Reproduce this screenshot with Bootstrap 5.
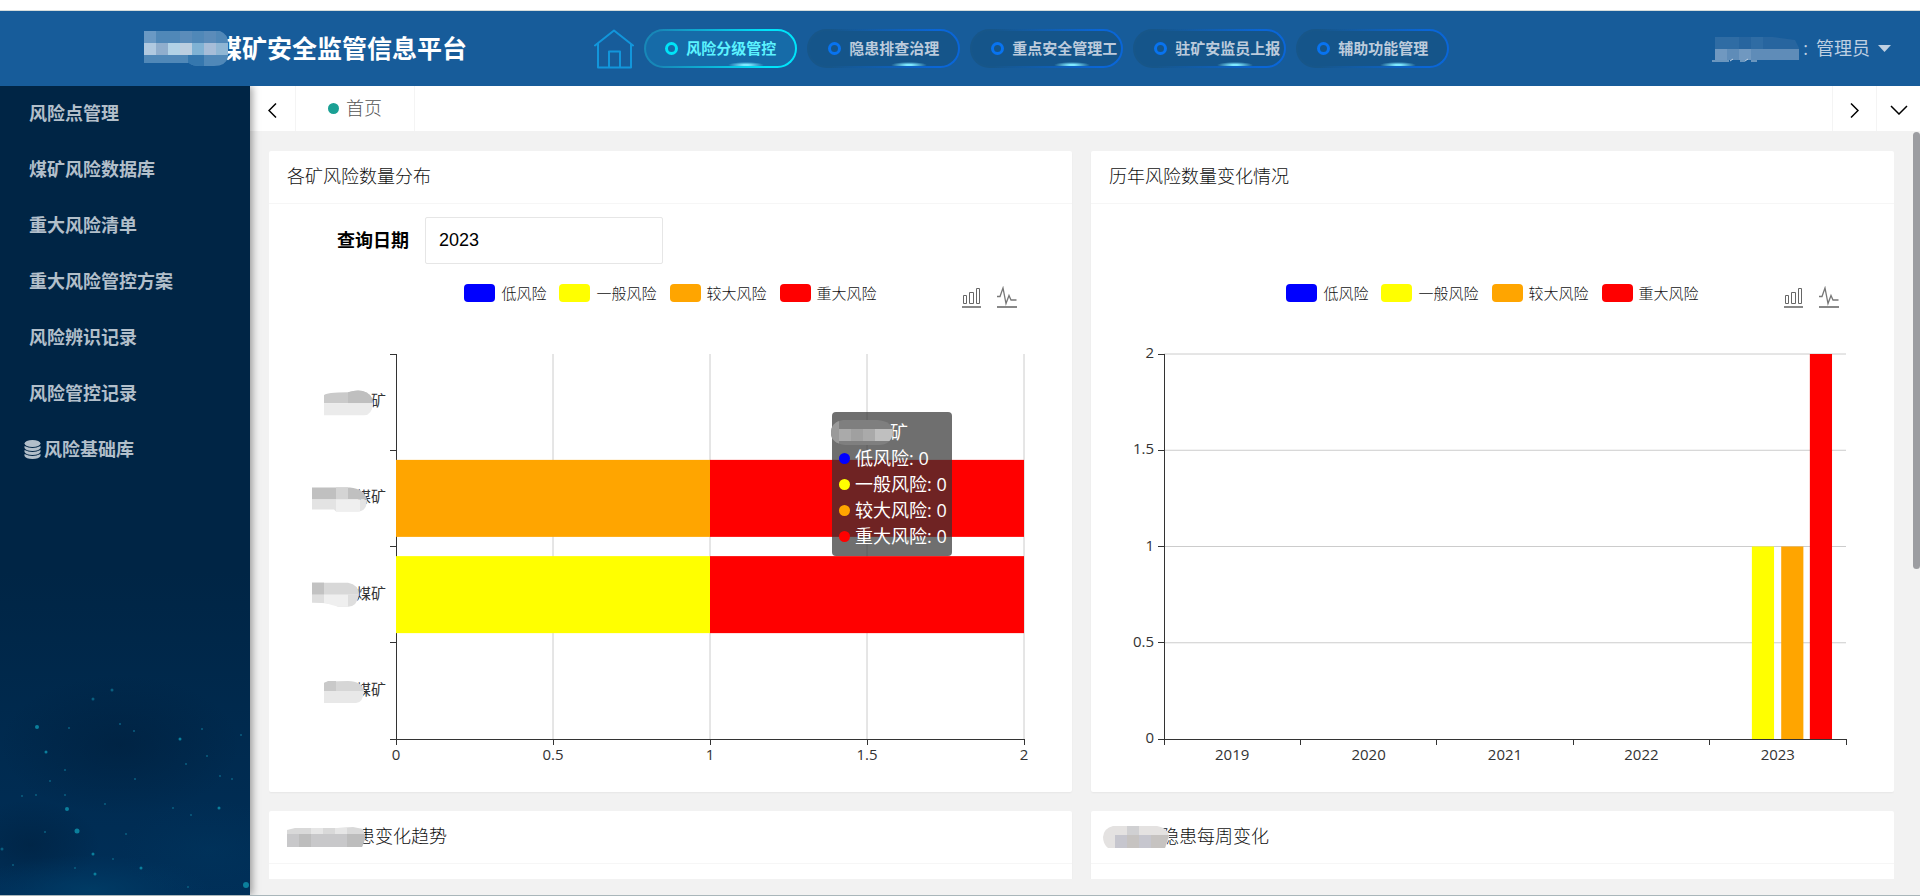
<!DOCTYPE html>
<html lang="zh-CN">
<head>
<meta charset="utf-8">
<meta name="viewport" content="width=device-width, initial-scale=1">
<title>煤矿安全监管信息平台</title>
<link href="https://cdn.jsdelivr.net/npm/bootstrap@5.3.0/dist/css/bootstrap.min.css" rel="stylesheet">
<style>
  body { font-family: "Open Sans", "Noto Sans CJK SC", sans-serif; font-size: 18px; color: #333; background: #f2f2f2; border-bottom: 1px solid #a9b6ba; }
  .top-strip { height: 11px; border-bottom: 1px solid #d4dcdc; }
  .app-header { height: 75px; background: #175c9a; }
  .brand-block { flex: 0 0 31%; padding-left: 144px; margin-right: -1px; }
  .brand-name { font-size: 25px; font-weight: 700; color: #fff; }
  .mosaic { flex: none; position: relative; z-index: 1; }
  .mosaic-brand { margin-right: -11px; }
  .mosaic-title { margin-right: -8px; }
  .mosaic-early { margin-left: -6px; }
  .pill-nav { gap: 10px; }
  .pill { position: relative; width: 153px; height: 39px; padding: 0 2px 0 19px; gap: 8px; border: 2px solid transparent; border-radius: 20px; font-size: 15px; font-weight: 700; color: #bccbdc; text-decoration: none; white-space: nowrap; overflow: hidden;
    background: linear-gradient(#15558a, #15558a) padding-box, linear-gradient(90deg, #175689 15%, #0a66d8 85%) border-box; }
  .pill::before { content: ""; flex: none; width: 13px; height: 13px; border: 3px solid #0873f0; border-radius: 50%; }
  .pill::after { content: ""; position: absolute; left: 82px; bottom: -2px; width: 36px; height: 6px; background: radial-gradient(closest-side, #7fe9ff 20%, transparent); }
  .pill.active { color: #5cf3ff; background: linear-gradient(#166ba8, #166ba8) padding-box, linear-gradient(90deg, #1788b8 10%, #00e4fa 80%) border-box; }
  .pill.active::before { border-color: #00e4f8; }
  .user-btn { color: #bfd0e2; padding: 0 29px 0 0; border: 0; background: none; gap: 8px; }
  .side-menu { width: 250px; flex: none; background: linear-gradient(#002545 60%, #002f58); box-shadow: 2px 0 8px rgba(0,0,0,.4); z-index: 2; }
  .side-link { height: 56px; padding: 0 0 1px 29px; font-weight: 700; color: #b2bfca; text-decoration: none; gap: 3px; }
  .side-link.has-icon { padding-left: 24px; }
  .tab-bar { height: 45px; background: #fff; }
  .tab-btn { width: 46px; border: 0; border-right: 1px solid #f4f4f4; background: none; padding: 0; }
  .tab-btn.at-right { width: 44px; border-right: 0; border-left: 1px solid #f4f4f4; }
  .tab-home { width: 119px; border-right: 1px solid #f4f4f4; color: #555; text-decoration: none; gap: 7px; font-weight: 300; }
  .tab-home::before { content: ""; width: 11px; height: 11px; border-radius: 50%; background: #1aa094; }
  .content-pane { padding: 20px 26px 16px 19px; position: relative; }
  .scroll-thumb { position: absolute; right: 0; top: 1px; width: 7px; height: 437px; border-radius: 4px; background: #9c9da1; }
  .panels { grid-template-columns: 1fr 1fr; gap: 19px; }
  .panel { background: #fff; border-radius: 2px; box-shadow: 0 1px 2px rgba(0,0,0,.05); }
  .panel-title { height: 53px; padding: 0 18px; border-bottom: 1px solid #f6f6f6; font-size: 18px; font-weight: 300; color: #111; margin: 0; }
  .query-row { padding: 13px 0 20px 68px; gap: 16px; color: #000; }
  .query-row label { font-weight: 700; }
  .query-row input { width: 238px; height: 47px; border: 1px solid #e6e6e6; border-radius: 2px; padding: 0 13px; font-family: "Liberation Sans", sans-serif; color: #000; }
  .legend-row { display: grid; grid-template-columns: 1fr auto 1fr; height: 24px; margin-bottom: 46px; padding: 0 55px; }
  .legend-list { grid-column: 2; gap: 13px; font-size: 15px; line-height: 18px; font-weight: 300; color: #111; }
  .legend-item { gap: 6px; }
  .swatch { width: 31px; height: 18px; border-radius: 4px; }
  .c-low { background: #00f; } .c-mid { background: #ff0; } .c-big { background: orange; } .c-max { background: red; }
  .tool-btn { border: 0; background: none; padding: 0; line-height: 0; }
  .plot { position: relative; height: 385px; margin: 0 48px 53px 127px; }
  .plot-years { margin-left: 73px; }
  .plot > svg { display: block; width: 100%; height: 100%; overflow: visible; font-size: 15px; fill: #333; }
  .plot svg svg { overflow: visible; }
  .grid-line { stroke: #ccc; } .axis-line { stroke: #333; }
  .chart-tip { position: absolute; right: 72px; top: 58px; width: 120px; padding: 7px; background: rgba(50,50,50,.7); border-radius: 4px; color: #fff; line-height: 26px; font-size: 18px; white-space: nowrap; }
  .chart-tip .dot { flex: none; width: 11px; height: 11px; border-radius: 50%; }
  .chart-tip .tip-row { gap: 5px; }
  .tip-name { margin-left: -8px; }
  .mosaic-tip { margin-right: -3px; }
  .panel-rest { height: 588px; }
</style>
</head>
<body class="vh-100 d-flex flex-column overflow-hidden">
<div class="top-strip bg-white flex-shrink-0"></div>
<header class="app-header d-flex align-items-center flex-shrink-0">
  <div class="brand-block d-flex align-items-center">
    <svg class="mosaic mosaic-brand" width="84" height="35" viewBox="0 0 84 35"><clipPath id="mb"><path d="M0 0H76Q84 3 84 12V26Q82 35 70 35H56Q48 35 45 32H0Z"/></clipPath><g clip-path="url(#mb)"><path fill="#5088b8" d="M0 0h84v35H0z"/><path fill="#6a99c4" d="M0 0h12v12H0z"/><path fill="#5b8cba" d="M36 0h12v12H36zM60 0h12v12H60z"/><path fill="#b0c9e0" d="M0 12h12v12H0z"/><path fill="#90aecd" d="M12 12h12v12H12z"/><path fill="#b2d2e6" d="M24 12h12v12H24z"/><path fill="#bccee0" d="M36 12h12v12H36z"/><path fill="#80b2d4" d="M48 12h12v12H48z"/><path fill="#a6bdd8" d="M60 12h12v12H60z"/><path fill="#8fb6d4" d="M72 12h12v12H72z"/><path fill="#3577ae" d="M44 24h16v11H44z"/></g></svg>
    <span class="brand-name">煤矿安全监管信息平台</span>
  </div>
  <nav class="pill-nav d-flex align-items-center">
    <a href="#" aria-label="首页"><svg class="d-block" width="40" height="40" viewBox="0 0 40 40" fill="none" stroke="#1296db" stroke-width="2" stroke-linejoin="round" stroke-linecap="round"><path d="M1 16.500 20 1.500 39 16.500M4 15V38.500H37V15M15 38V22.500H26V38"/></svg></a>
    <a class="pill active d-flex align-items-center" href="#">风险分级管控</a>
    <a class="pill d-flex align-items-center" href="#">隐患排查治理</a>
    <a class="pill d-flex align-items-center" href="#">重点安全管理工</a>
    <a class="pill d-flex align-items-center" href="#">驻矿安监员上报</a>
    <a class="pill d-flex align-items-center" href="#">辅助功能管理</a>
  </nav>
  <button class="user-btn d-flex align-items-center ms-auto" type="button">
    <span class="d-flex align-items-center"><svg width="92" height="26" viewBox="0 0 92 26"><path fill="#27659f" d="M4 1H62L84 4 88 12V24H4Z"/><path fill="#2f6ca4" d="M4 1h24v12H4zM40 1h12v12H40z"/><path fill="#5f8cb8" d="M4 13h84v11H4z"/><path fill="#7098c0" d="M4 13h12v11H4zM28 13h12v11H28z"/><path fill="none" stroke="#bfd0e2" d="M1 25H18M19 25l3-2M29 25h5l3-2M40 25h6"/></svg>:</span>
    <span>管理员</span>
    <svg width="13" height="7" viewBox="0 0 13 7"><path fill="#bfd0e2" d="M0 0h13L6.500 7z"/></svg>
  </button>
</header>
<div class="d-flex flex-grow-1 overflow-hidden">
  <aside class="side-menu d-flex flex-column">
    <nav class="d-flex flex-column">
      <a class="side-link d-flex align-items-center" href="#">风险点管理</a>
      <a class="side-link d-flex align-items-center" href="#">煤矿风险数据库</a>
      <a class="side-link d-flex align-items-center" href="#">重大风险清单</a>
      <a class="side-link d-flex align-items-center" href="#">重大风险管控方案</a>
      <a class="side-link d-flex align-items-center" href="#">风险辨识记录</a>
      <a class="side-link d-flex align-items-center" href="#">风险管控记录</a>
      <a class="side-link has-icon d-flex align-items-center" href="#"><svg width="17" height="19" viewBox="0 0 17 19"><ellipse cx="8.500" cy="3.500" rx="8" ry="3.500" fill="#b2bfca"/><path fill="#b2bfca" d="M.5 6Q8.500 10 16.500 6V8Q15 11 8.500 11T.5 8ZM.5 10Q8.500 14 16.500 10V12Q15 15 8.500 15T.5 12ZM.5 14Q8.500 18 16.500 14V16Q15 19 8.500 19T.5 16Z"/></svg>风险基础库</a>
    </nav>
    <svg class="mt-auto d-block" width="250" height="225" viewBox="0 0 250 225">
      <defs><radialGradient id="haze"><stop offset="0" stop-color="#00406a" stop-opacity=".7"/><stop offset="1" stop-color="#003a66" stop-opacity="0"/></radialGradient><radialGradient id="dusk"><stop offset="0" stop-color="#001a34" stop-opacity=".4"/><stop offset="1" stop-color="#001a34" stop-opacity="0"/></radialGradient></defs>
      <ellipse cx="120" cy="75" rx="120" ry="70" fill="url(#dusk)"/><ellipse cx="30" cy="175" rx="70" ry="45" fill="url(#dusk)"/><ellipse cx="90" cy="220" rx="120" ry="35" fill="url(#haze)"/><ellipse cx="210" cy="180" rx="90" ry="50" fill="url(#haze)" opacity=".3"/>
      <g fill="#0b7f9c"><circle cx="37" cy="57" r="2"/><circle cx="67" cy="139" r="2"/><circle cx="77" cy="161" r="2.500"/><circle cx="246" cy="215" r="3"/><circle cx="46" cy="82" r="1.500"/><circle cx="93" cy="184" r="1.500"/><circle cx="95" cy="204" r="1.500"/><circle cx="141" cy="198" r="1.500"/><circle cx="219" cy="138" r="1.500"/><circle cx="180" cy="69" r="1.500"/></g>
      <g fill="#0a5f80"><circle cx="93" cy="29" r="1.500"/><circle cx="112" cy="20" r="1.500"/><circle cx="69" cy="58" r="1"/><circle cx="134" cy="61" r="1"/><circle cx="120" cy="54" r="1"/><circle cx="202" cy="59" r="1"/><circle cx="207" cy="86" r="1"/><circle cx="65" cy="100" r="1"/><circle cx="50" cy="111" r="1"/><circle cx="36" cy="125" r="1"/><circle cx="22" cy="126" r="1"/><circle cx="65" cy="125" r="1"/><circle cx="105" cy="134" r="1"/><circle cx="126" cy="164" r="1"/><circle cx="191" cy="145" r="1"/><circle cx="173" cy="138" r="1"/><circle cx="135" cy="109" r="1"/><circle cx="232" cy="109" r="1"/><circle cx="220" cy="106" r="1"/><circle cx="186" cy="94" r="1"/><circle cx="45" cy="162" r="1"/><circle cx="13" cy="195" r="1"/><circle cx="2" cy="179" r="1.500"/><circle cx="75" cy="198" r="1"/><circle cx="113" cy="189" r="1"/><circle cx="241" cy="65" r="1"/><circle cx="188" cy="217" r="1"/></g>
    </svg>
  </aside>
  <main class="d-flex flex-column flex-grow-1 overflow-hidden">
    <div class="tab-bar d-flex flex-shrink-0">
      <button class="tab-btn" type="button" aria-label="向左"><svg width="9" height="15" viewBox="0 0 9 15" fill="none" stroke="#000" stroke-width="1.500"><path d="M8 .5 1 7.500 8 14.500"/></svg></button>
      <a class="tab-home d-flex align-items-center justify-content-center" href="#">首页</a>
      <button class="tab-btn at-right ms-auto" type="button" aria-label="向右"><svg width="9" height="15" viewBox="0 0 9 15" fill="none" stroke="#000" stroke-width="1.500"><path d="M1 .5 8 7.500 1 14.500"/></svg></button>
      <button class="tab-btn at-right" type="button" aria-label="展开"><svg width="18" height="10" viewBox="0 0 18 10" fill="none" stroke="#000" stroke-width="1.500"><path d="M1 1 9 9 17 1"/></svg></button>
    </div>
    <div class="content-pane flex-grow-1 overflow-hidden">
      <div class="panels d-grid h-100 overflow-hidden align-content-start">
        <section class="panel">
          <h2 class="panel-title d-flex align-items-center">各矿风险数量分布</h2>
          <form class="query-row d-flex align-items-center"><label for="year">查询日期</label><input id="year" type="text" value="2023"></form>
          <div class="legend-row">
            <div class="legend-list d-flex"><span class="legend-item d-flex"><i class="swatch c-low"></i>低风险</span><span class="legend-item d-flex"><i class="swatch c-mid"></i>一般风险</span><span class="legend-item d-flex"><i class="swatch c-big"></i>较大风险</span><span class="legend-item d-flex"><i class="swatch c-max"></i>重大风险</span></div>
            <div class="d-flex justify-content-end align-items-end gap-3">
              <button class="tool-btn" type="button" aria-label="柱状图"><svg width="19" height="22" viewBox="0 0 19 22" fill="none" stroke="#666"><path d="M1.500 9.500h3v8h-3zM7.500 6.500h4v11h-4zM14.500 2.500h3v15h-3z"/><path stroke-width="2" stroke="#888" d="M0 21h19"/></svg></button>
              <button class="tool-btn" type="button" aria-label="折线图"><svg width="20" height="22" viewBox="0 0 20 22" fill="none" stroke="#777"><path stroke-width="1.300" d="M0 10.500H3L6 2 9 17.500 12 9.500 14 14H19.500"/><path stroke-width="2" stroke="#888" d="M0 21h20"/></svg></button>
            </div>
          </div>
          <div class="plot">
            <svg role="img" aria-label="各矿风险数量分布图">
              <g class="grid-line"><line x1="25%" x2="25%" y2="100%"/><line x1="50%" x2="50%" y2="100%"/><line x1="75%" x2="75%" y2="100%"/><line x1="100%" x2="100%" y2="100%"/></g>
              <g class="axis-line" shape-rendering="crispEdges"><line y2="100%"/><line x1="0" x2="100%" y1="100%" y2="100%"/><line x1="-6" x2="0" y1="0" y2="0"/><line x1="-6" x2="0" y1="25%" y2="25%"/><line x1="-6" x2="0" y1="50%" y2="50%"/><line x1="-6" x2="0" y1="75%" y2="75%"/><line x1="-6" x2="0" y1="100%" y2="100%"/>
                <svg y="100%"><line y2="6"/><line x1="25%" x2="25%" y2="6"/><line x1="50%" x2="50%" y2="6"/><line x1="75%" x2="75%" y2="6"/><line x1="100%" x2="100%" y2="6"/></svg></g>
              <rect x="0" y="27.500%" width="50%" height="20%" fill="orange"/><rect x="50%" y="27.500%" width="50%" height="20%" fill="red"/>
              <rect x="0" y="52.500%" width="50%" height="20%" fill="#ff0"/><rect x="50%" y="52.500%" width="50%" height="20%" fill="red"/>
              <svg y="12.500%"><text x="-10" y="4" text-anchor="end">矿</text><path fill="#cacaca" d="M-72 1V-7Q-70-10-48-10-30-15-24-4L-23 1Z"/><path fill="#bfbfbf" d="M-48 1V-10Q-30-15-24-4L-23 1Z"/><path fill="#ebebeb" d="M-72 1H-23Q-24 13-32 13H-72Z"/></svg>
              <svg y="37.500%"><text x="-10" y="4" text-anchor="end">煤矿</text><path fill="#c0c0c0" d="M-84 1V-11H-46Q-32-10-29 1Z"/><path fill="#d4d4d4" d="M-60-11h12V1h-12z"/><path fill="#e3e3e3" d="M-84 1H-29Q-29 13-38 13H-60L-62 11H-84Z"/><path fill="#efefef" d="M-60 1h24v12h-24z"/></svg>
              <svg y="62.500%"><text x="-10" y="4" text-anchor="end">煤矿</text><path fill="#d8d8d8" d="M-84 0V-12H-48Q-37-10-37 0Z"/><path fill="#c2c2c2" d="M-84-12h12V0h-12z"/><path fill="#dedede" d="M-84 0H-37Q-39 12-48 12H-58Q-62 8-84 8Z"/><path fill="#efefef" d="M-72 0h24v12H-58L-72 8z"/></svg>
              <svg y="87.500%"><text x="-10" y="4" text-anchor="end">煤矿</text><path fill="#d6d6d6" d="M-72 0V-8Q-70-10-48-10-34-10-32 0Z"/><path fill="#c9c9c9" d="M-72 0V-8L-68-10H-60V0Z"/><path fill="#e8e8e8" d="M-72 0H-32Q-33 12-40 12H-72Z"/></svg>
              <svg y="100%" text-anchor="middle"><text x="0" y="21">0</text><text x="25%" y="21">0.5</text><text x="50%" y="21">1</text><text x="75%" y="21">1.5</text><text x="100%" y="21">2</text></svg>
            </svg>
            <div class="chart-tip">
              <div class="tip-name d-flex align-items-center"><svg class="mosaic mosaic-tip" width="62" height="25" viewBox="0 0 62 25"><clipPath id="mt"><path d="M12 0H46Q62 1 62 13 60 25 48 25H14Q0 23 0 13 0 2 12 0Z"/></clipPath><g clip-path="url(#mt)"><path fill="#7f7f7f" d="M0 0h62v25H0z"/><path fill="#9a9a9a" d="M0 0h8v25H0z"/><path fill="#aaa" d="M8 9h12v12H8zM32 9h12v12H32z"/><path fill="#a0a0a0" d="M20 9h12v12H20z"/><path fill="#bfbfbf" d="M44 9h18v12H44z"/></g></svg>矿</div>
              <div class="tip-row d-flex align-items-center"><i class="dot c-low"></i>低风险: 0</div>
              <div class="tip-row d-flex align-items-center"><i class="dot c-mid"></i>一般风险: 0</div>
              <div class="tip-row d-flex align-items-center"><i class="dot c-big"></i>较大风险: 0</div>
              <div class="tip-row d-flex align-items-center"><i class="dot c-max"></i>重大风险: 0</div>
            </div>
          </div>
        </section>
        <section class="panel d-flex flex-column">
          <h2 class="panel-title d-flex align-items-center">历年风险数量变化情况</h2>
          <div class="legend-row mt-auto">
            <div class="legend-list d-flex"><span class="legend-item d-flex"><i class="swatch c-low"></i>低风险</span><span class="legend-item d-flex"><i class="swatch c-mid"></i>一般风险</span><span class="legend-item d-flex"><i class="swatch c-big"></i>较大风险</span><span class="legend-item d-flex"><i class="swatch c-max"></i>重大风险</span></div>
            <div class="d-flex justify-content-end align-items-end gap-3">
              <button class="tool-btn" type="button" aria-label="柱状图"><svg width="19" height="22" viewBox="0 0 19 22" fill="none" stroke="#666"><path d="M1.500 9.500h3v8h-3zM7.500 6.500h4v11h-4zM14.500 2.500h3v15h-3z"/><path stroke-width="2" stroke="#888" d="M0 21h19"/></svg></button>
              <button class="tool-btn" type="button" aria-label="折线图"><svg width="20" height="22" viewBox="0 0 20 22" fill="none" stroke="#777"><path stroke-width="1.300" d="M0 10.500H3L6 2 9 17.500 12 9.500 14 14H19.500"/><path stroke-width="2" stroke="#888" d="M0 21h20"/></svg></button>
            </div>
          </div>
          <div class="plot plot-years">
            <svg role="img" aria-label="历年风险数量变化图">
              <g class="grid-line"><line x2="100%"/><line x2="100%" y1="25%" y2="25%"/><line x2="100%" y1="50%" y2="50%"/><line x2="100%" y1="75%" y2="75%"/></g>
              <rect x="86.200%" y="50%" width="3.250%" height="50%" fill="#ff0"/><rect x="90.500%" y="50%" width="3.250%" height="50%" fill="orange"/><rect x="94.700%" y="0" width="3.250%" height="100%" fill="red"/>
              <g class="axis-line" shape-rendering="crispEdges"><line y2="100%"/><line x2="100%" y1="100%" y2="100%"/><line x1="-6" x2="0" y1="0" y2="0"/><line x1="-6" x2="0" y1="25%" y2="25%"/><line x1="-6" x2="0" y1="50%" y2="50%"/><line x1="-6" x2="0" y1="75%" y2="75%"/><line x1="-6" x2="0" y1="100%" y2="100%"/>
                <svg y="100%"><line y2="6"/><line x1="20%" x2="20%" y2="6"/><line x1="40%" x2="40%" y2="6"/><line x1="60%" x2="60%" y2="6"/><line x1="80%" x2="80%" y2="6"/><line x1="100%" x2="100%" y2="6"/></svg></g>
              <g text-anchor="end"><text x="-10" y="0" dy="4">2</text><text x="-10" y="25%" dy="4">1.5</text><text x="-10" y="50%" dy="4">1</text><text x="-10" y="75%" dy="4">0.5</text><text x="-10" y="100%" dy="4">0</text></g>
              <svg y="100%" text-anchor="middle"><text x="10%" y="21">2019</text><text x="30%" y="21">2020</text><text x="50%" y="21">2021</text><text x="70%" y="21">2022</text><text x="90%" y="21">2023</text></svg>
            </svg>
          </div>
        </section>
        <section class="panel">
          <h2 class="panel-title d-flex align-items-center"><svg class="mosaic mosaic-title" width="78" height="20" viewBox="0 0 78 20"><path fill="#d9d9d9" d="M0 3 8 1H50L66 0 76 2 78 8H0Z"/><path fill="#e6e6e6" d="M24 1h12v7H24zM48 1h12v7H48z"/><path fill="#c8c8ca" d="M0 7H78V12L75 20H0Z"/><path fill="#bdbdbd" d="M12 7h12v13H12zM60 7h18v5l-3 8H60z"/></svg>患变化趋势</h2>
          <div class="panel-rest"></div>
        </section>
        <section class="panel">
          <h2 class="panel-title d-flex align-items-center"><svg class="mosaic mosaic-title mosaic-early" width="66" height="22" viewBox="0 0 66 22"><path fill="#e4e2e1" d="M10 0H54Q66 2 66 12L62 22H5Q0 18 0 11 1 2 10 0Z"/><path fill="#d0d0d2" d="M24 0h12v9H24z"/><path fill="#c6c6ce" d="M12 9h12v13H12zM36 9h12v13H36z"/><path fill="#c6c3c1" d="M24 9h12v13H24zM48 9h18l-4 13H48z"/></svg>隐患每周变化</h2>
          <div class="panel-rest"></div>
        </section>
      </div>
      <div class="scroll-thumb"></div>
    </div>
  </main>
</div>
<script src="https://cdn.jsdelivr.net/npm/bootstrap@5.3.0/dist/js/bootstrap.bundle.min.js"></script>
</body>
</html>
